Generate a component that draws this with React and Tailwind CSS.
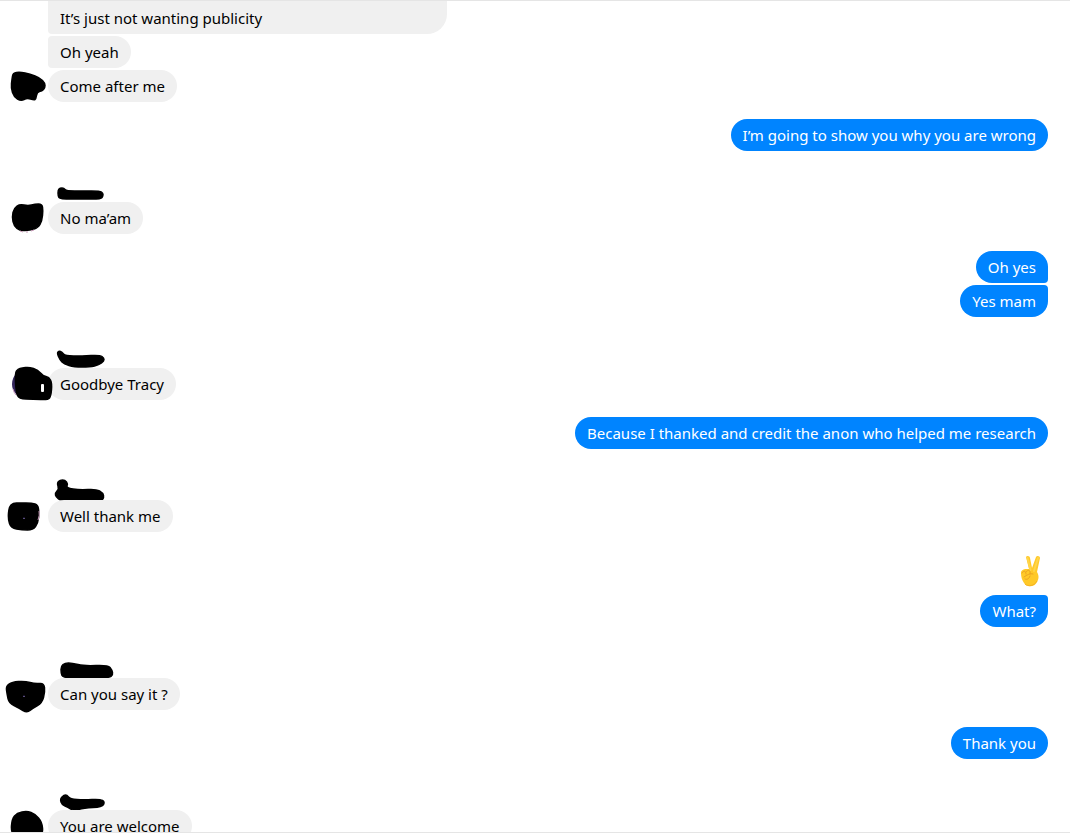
const THREAD = [
  {
    from: "them",
    messages: [
      { text: "It’s just not wanting publicity", shape: "tail" },
      { text: "Oh yeah", shape: "middle" },
      { text: "Come after me", shape: "full" },
    ],
    avatar: { points: "13,3 20,2 30,4 40,8 45,13 45,18 42,21 37,22 36,29 34,30 27,28 21,31 14,27 11,18 12,9" },
  },
  { from: "me", messages: [{ text: "I’m going to show you why you are wrong", shape: "full" }] },
  {
    from: "them",
    messages: [{ text: "No ma’am", shape: "full" }],
    name: "10,8 12,6 16,6 18,9 35,9 52,9 55,11 55,14 53,17 35,17 12,17 10,14",
    avatar: {
      points: "14,6 20,2 28,4 35,2 42,2 43,8 42,19 38,26 30,28 20,29 14,24 12,15",
      fringe: "M20 29l3 1M26 30l2 0M31 29l3-1",
    },
  },
  {
    from: "me",
    messages: [
      { text: "Oh yes", shape: "first" },
      { text: "Yes mam", shape: "last" },
    ],
  },
  {
    from: "them",
    messages: [{ text: "Goodbye Tracy", shape: "full" }],
    name: "9,5 11,3 14,4 17,8 34,8 52,7 56,10 56,13 51,17 42,19 26,19 16,16 12,12",
    avatar: {
      tint: "#33265c",
      points: "18,1 22,0 29,-1 38,2 43,8 49,9 52,15 51,28 48,32 33,31 19,31 16,24 15,5",
      fringe: "M13 21q1 4 3 6",
      slot: true,
    },
  },
  { from: "me", messages: [{ text: "Because I thanked and credit the anon who helped me research", shape: "full" }] },
  {
    from: "them",
    messages: [{ text: "Well thank me", shape: "full" }],
    name: "9,3 12,0 17,0 20,4 18,8 32,10 48,9 55,13 56,18 53,21 34,21 13,21 8,17 7,13 11,9",
    avatar: {
      points: "9,7 13,3 20,3 32,3 38,5 39,13 38,23 33,30 22,30 11,28 8,19",
      fringe: "M39 11q1 4-1 9",
      speck: true,
    },
  },
  {
    from: "me",
    messages: [
      { emoji: true },
      { text: "What?", shape: "last" },
    ],
  },
  {
    from: "them",
    messages: [{ text: "Can you say it ?", shape: "full" }],
    name: "13,8 17,5 24,5 36,8 60,7 64,12 65,17 61,20 38,19 15,20 13,15",
    avatar: {
      points: "6,8 12,4 25,3 35,6 44,5 45,14 42,25 33,30 27,35 19,30 9,25 7,16",
      speck: true,
    },
  },
  { from: "me", messages: [{ text: "Thank you", shape: "full" }] },
  {
    from: "them",
    messages: [{ text: "You are welcome", shape: "full" }],
    name: "12,9 16,5 19,5 22,9 36,10 52,9 57,12 54,17 36,18 25,21 20,17 14,15",
    avatar: { points: "12,9 17,3 27,1 35,4 42,12 43,24 36,26 16,26 11,22" },
  },
];

// corner variants for each position in a run of bubbles
const THEIR_SHAPES = {
  tail: "w-[399px] pt-[7px] rounded-br-[20px] rounded-bl",
  middle: "pt-1.5 rounded-r-2xl rounded-l",
  full: "pt-1.5 rounded-2xl",
};

const MY_SHAPES = {
  full: "rounded-2xl",
  first: "rounded-2xl rounded-br",
  last: "rounded-2xl rounded-tr",
};

// closed curve that runs through the midpoints of the given outline
function smooth(points) {
  const pts = points.split(" ").map((p) => p.split(",").map(Number));
  const mid = (a, b) => `${(a[0] + b[0]) / 2} ${(a[1] + b[1]) / 2}`;
  const start = mid(pts[pts.length - 1], pts[0]);
  const curves = pts.map((p, i) => `Q${p[0]} ${p[1]} ${mid(p, pts[(i + 1) % pts.length])}`);
  return `M${start}${curves.join("")}Z`;
}

function Scribble({ points }) {
  return <path d={smooth(points)} fill="#000" stroke="#000" strokeWidth="1.5" strokeLinejoin="round" />;
}

function Avatar({ points, tint, fringe, slot, speck }) {
  return (
    <svg className="relative z-10 h-8 w-12 shrink-0 overflow-visible" viewBox="0 0 48 32" aria-hidden="true">
      {tint && <circle cx="27" cy="16" r="15" fill={tint} />}
      <Scribble points={points} />
      {fringe && <path d={fringe} stroke="#c79bb8" strokeWidth="1" fill="none" />}
      {slot && <rect x="41" y="16" width="3" height="8" rx="1" fill="#fff" />}
      {speck && <path d="M23 18l2 0l-1 1z" fill="#c4b5d8" stroke="#554488" strokeWidth="0.5" />}
    </svg>
  );
}

function SenderName({ points }) {
  return (
    <svg className="ml-12 h-5 w-16 overflow-visible" viewBox="0 0 64 20" aria-hidden="true">
      <Scribble points={points} />
    </svg>
  );
}

function VictoryHand() {
  return (
    <svg className="mr-1.5 mb-1.5 h-8 w-[22px]" viewBox="0 0 22 32" role="img" aria-label="Victory hand">
      <path
        d="M6 2c1-2 4-1 4 1l2 10L16 2c1-2 4-1 4 1l-3 14c2 3 2 7 0 10-2 5-10 6-13 1-2-3-3-6-3-10 0-3 3-4 5-4h3z"
        fill="#ffc928"
      />
      <path d="M7.500 3l3 12M18 3l-4 13" stroke="#ffd54a" strokeWidth="2" strokeLinecap="round" />
      <path
        d="M2 18c2-3 4-2 4 1M6 17c2-3 5-2 4 2M4 22c3-2 6-4 9-3M10 21c-1 3-3 4-5 3"
        fill="none"
        stroke="#eba323"
        strokeWidth="1"
        strokeLinecap="round"
      />
      <path d="M5 29c3 3 9 2 12-3" fill="none" stroke="#f5b324" strokeWidth="1" />
    </svg>
  );
}

function TheirGroup({ messages, name, avatar }) {
  const earlier = messages.slice(0, -1);
  const last = messages[messages.length - 1];

  return (
    <li className={name ? "mt-[31px] flex flex-col" : "flex flex-col gap-0.5"}>
      {name && <SenderName points={name} />}
      {earlier.map((m) => (
        <p key={m.text} className={`ml-12 self-start bg-[#f0f0f0] px-3 pb-1.5 ${THEIR_SHAPES[m.shape]}`}>
          {m.text}
        </p>
      ))}
      <div className="flex">
        <Avatar {...avatar} />
        <p className={`bg-[#f0f0f0] px-3 pb-1.5 ${THEIR_SHAPES[last.shape]}`}>{last.text}</p>
      </div>
    </li>
  );
}

function MyGroup({ messages }) {
  const startsWithEmoji = messages[0].emoji;

  return (
    <li className={`flex flex-col items-end gap-0.5 pr-[22px] ${startsWithEmoji ? "mt-[23px]" : "mt-[17px]"}`}>
      {messages.map((m) =>
        m.emoji ? (
          <VictoryHand key="emoji" />
        ) : (
          <p key={m.text} className={`bg-[#0084ff] px-3 py-1.5 text-white ${MY_SHAPES[m.shape]}`}>
            {m.text}
          </p>
        )
      )}
    </li>
  );
}

export default function App() {
  return (
    <div className="flex h-screen flex-col bg-white pb-[3px] font-['Noto_Sans','Open_Sans',sans-serif] text-[15px] leading-5 text-black">
      <main className="min-h-0 flex-1 overflow-hidden border-y border-[#e5e5e5]">
        <ul>
          {THREAD.map((group, i) =>
            group.from === "me" ? <MyGroup key={i} {...group} /> : <TheirGroup key={i} {...group} />
          )}
        </ul>
      </main>
    </div>
  );
}
